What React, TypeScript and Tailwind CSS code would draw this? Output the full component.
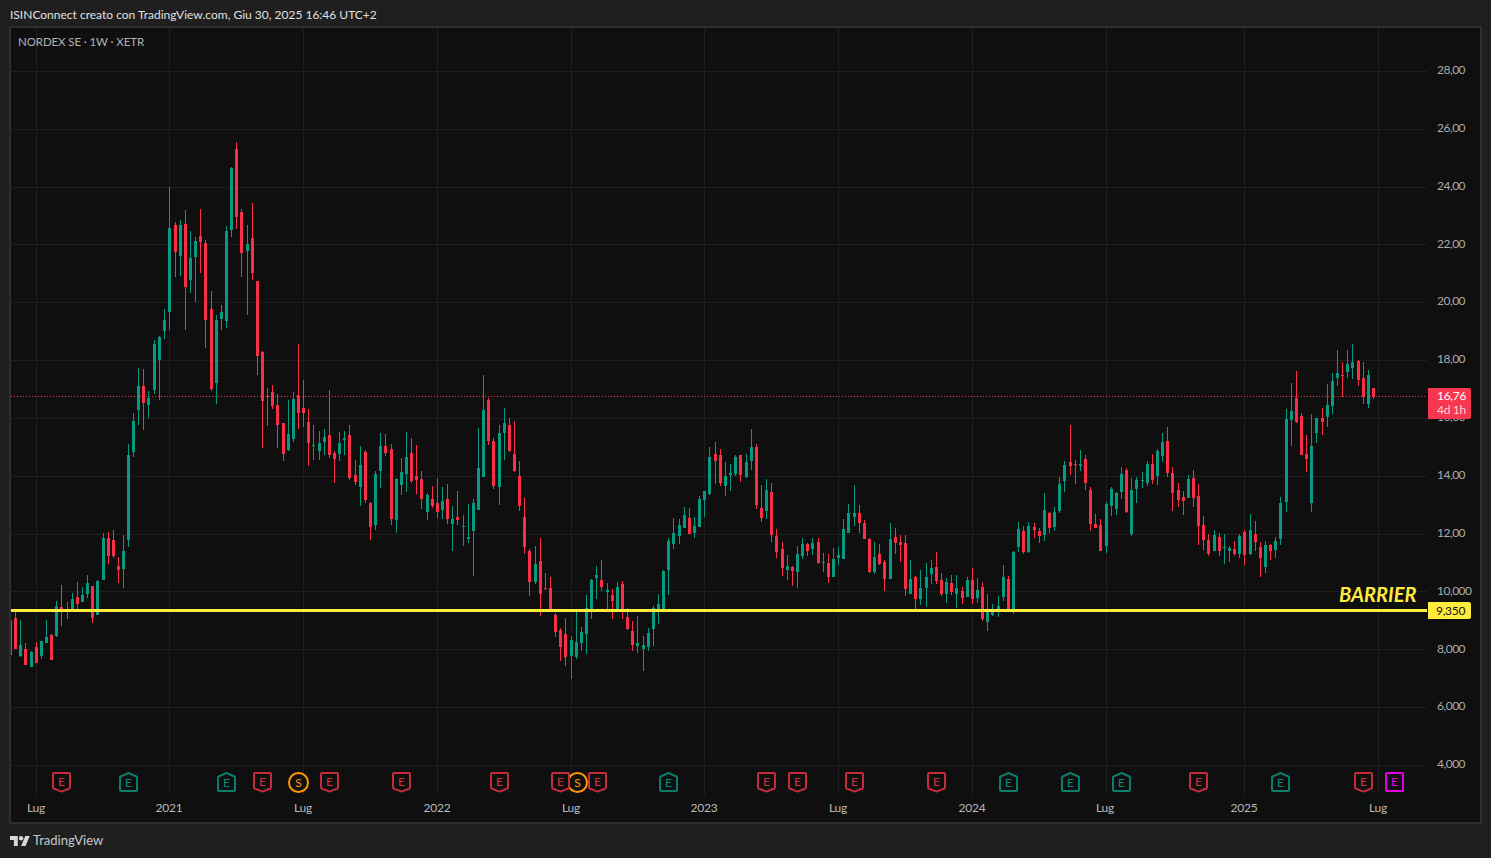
import React from "react";

type Row = [number, number, number, number, number, number];
// [x, high, bodyTop, bodyBottom, low, isGreen]
const part0: Row[] = [
  [10.3,617,620,655,655,1],[15.3,609,618,649,649,0],[20.3,620,645,656,657,1],[25.3,643,649,665,665,0],[31.3,651,652,667,667,1],
  [36.3,642,647,663,663,0],[41.3,641,641,656,659,1],[46.3,620,637,643,643,1],[51.3,634,635,660,660,0],[56.3,601,606,636,637,1],
  [61.3,585,607,611,626,0],[67.3,602,610,612,619,0],[72.3,593,599,610,610,1],[77.3,582,597,604,610,0],[82.3,587,595,602,602,1],
  [87.3,575,583,594,598,1],[92.3,586,586,618,623,0],[97.3,580,581,615,615,1],[103.3,533,538,580,580,1],[108.3,532,538,556,564,0],
  [113.3,530,540,556,558,0],[118.3,557,566,570,583,0],[123.3,535,551,569,588,1],[128.3,444,455,540,547,1],[133.3,413,421,452,457,1],
  [138.3,368,386,410,425,1],[143.3,369,386,403,430,0],[148.3,391,398,405,418,1],[154.3,340,344,390,394,1],[159.3,336,337,360,400,1],
  [164.3,309,320,331,339,1],[169.3,187,228,312,330,1],[175.3,222,225,252,277,0],[180.3,220,225,256,276,1],[185.3,210,224,287,330,0],
  [190.3,231,258,280,293,1],[195.3,237,241,257,302,1],[200.3,209,236,242,273,0],[205.3,240,243,320,348,0],[211.3,291,309,389,391,0],
  [216.3,315,320,383,404,1],[221.3,305,312,319,330,1],[226.3,226,231,321,328,1],[231.3,167,168,230,237,1],[236.3,142,149,217,229,0],
  [241.3,209,212,253,277,0],[247.3,225,244,251,315,1],[252.3,203,238,273,280,0],[257.3,281,281,356,375,0],[262.3,351,352,401,448,0],
  [267.3,388,396,397,426,0],[272.3,385,392,406,409,0],[277.3,394,405,425,448,0],[283.3,423,423,454,461,0],[288.3,400,434,450,451,1],
  [293.3,392,399,439,442,1],[298.3,344,395,413,429,0],[303.3,380,408,413,427,0],[308.3,409,422,443,466,0],[313.3,425,445,446,460,1],
  [319.3,431,443,451,460,1],[324.3,429,437,442,455,1],[329.3,390,435,455,458,0],
];
const part1: Row[] = [
  [13,243,249,267,338,0],[28,186,219,252,272,1],[43,183,204,210,255,1],[58,165,195,324,330,0],[76,270,315,336,345,0],[91,228,285,351,408,1],
  [106,240,246,390,399,0],[121,396,399,471,510,0],[136,303,312,465,480,1],[151,189,228,303,354,1],[166,192,228,249,258,0],[184,222,237,447,465,0],
  [199,324,327,450,489,1],[214,264,306,345,375,1],[229,186,261,312,366,1],[244,204,249,333,339,0],[259,225,318,330,372,0],[274,303,327,387,417,0],
  [292,369,375,426,450,1],[307,348,387,408,414,0],[322,324,399,426,444,0],[337,351,393,420,447,1],[352,342,387,447,462,0],[367,408,447,462,543,1],
  [382,363,441,450,465,0],[400,435,468,471,528,1],[415,402,501,507,519,1],[430,387,399,483,618,1],[445,174,294,420,420,1],[460,15,120,321,321,1],
  [475,84,90,213,225,0],[490,204,213,348,357,0],[508,165,189,351,405,1],[523,114,159,189,270,1],[538,144,165,243,246,0],[553,153,252,303,306,0],
  [568,273,318,408,423,0],[583,384,441,531,552,0],[598,537,543,636,678,0],[616,528,582,636,642,1],[631,504,573,672,738,0],[646,609,654,657,660,0],
  [661,621,654,720,723,0],[676,729,735,786,801,0],[691,774,780,831,873,0],[706,744,792,861,888,0],[724,798,810,858,927,1],[739,723,816,861,867,1],
  [754,771,786,819,843,1],[769,675,714,792,852,1],[784,627,630,717,747,1],[799,588,615,624,687,1],[814,570,630,651,663,0],[832,639,660,666,723,1],
  [847,657,675,693,747,0],[862,636,651,720,720,1],[877,633,642,726,747,0],[892,714,741,777,780,0],[907,753,783,825,843,0],[922,738,819,828,849,1],
  [940,798,825,837,903,1],[955,774,789,831,843,1],[970,708,714,777,828,1],[985,672,702,717,762,1],[1000,600,603,720,720,1],[1015,504,513,600,675,1],
  [1030,444,489,522,537,1],[1048,447,465,498,522,1],[1063,411,435,474,474,1],[1078,414,444,492,492,0],
];
const part2: Row[] = [
  [103,351,378,399,414,1],[118,288,297,381,381,1],[133,273,273,300,351,1],[148,141,171,282,285,1],[166,126,162,183,252,0],[181,147,165,249,258,0],
  [196,186,228,258,288,1],[211,192,219,225,273,1],[226,165,171,222,228,1],[241,165,165,225,246,0],[259,162,186,231,234,1],[274,87,141,183,210,1],
  [289,132,141,315,327,0],[304,255,324,354,366,0],[319,237,270,333,357,1],[334,249,276,405,426,0],[349,387,408,456,474,0],[367,426,447,504,528,0],
  [382,465,498,510,540,1],[397,498,501,513,558,0],[412,438,462,516,564,1],[427,414,432,468,477,1],[442,429,432,453,468,0],[457,414,429,447,465,1],
  [475,414,426,489,492,0],[490,459,486,489,516,1],[505,462,489,531,549,0],[520,444,477,531,531,1],[535,441,465,474,495,1],[550,357,387,477,477,1],
  [565,312,339,399,399,1],[583,255,339,351,378,1],[598,315,339,369,399,0],[613,360,369,417,417,0],[628,414,417,516,519,0],[643,426,471,516,522,1],
  [658,432,462,492,495,0],[673,480,486,537,573,0],[691,369,417,537,537,1],[706,384,411,429,462,0],[721,405,426,435,486,0],[736,405,429,567,588,0],
  [751,480,537,582,582,1],[766,528,531,597,633,0],[781,510,564,597,615,1],[799,489,531,564,621,1],[814,480,504,522,552,1],[829,456,501,543,552,0],
  [844,519,540,582,588,0],[859,534,546,582,609,1],[874,525,549,576,585,0],[889,525,564,582,624,1],[907,561,573,594,612,0],[922,531,540,591,591,1],
  [937,504,540,597,612,0],[952,534,570,594,609,1],[967,546,561,657,663,0],[982,582,630,666,693,1],[997,612,630,645,648,1],[1015,588,618,636,651,1],
  [1030,495,531,591,603,1],[1045,528,537,630,633,0],[1060,453,456,633,642,1],[1075,366,387,441,456,1],
];
const part3: Row[] = [
  [40,558,573,636,642,0],[55,546,558,636,639,1],[73,549,561,570,594,0],[88,564,573,588,609,0],[103,459,510,585,603,1],[118,516,519,564,579,0],
  [133,501,516,561,573,1],[148,411,432,513,519,1],[163,363,375,423,456,1],[181,255,366,378,405,0],[196,360,372,375,432,0],[211,330,372,378,393,1],
  [226,345,357,429,450,0],[241,441,450,552,573,0],[256,522,552,564,564,0],[271,537,555,633,633,0],[289,486,492,618,639,1],[304,441,447,498,528,1],
  [319,456,459,507,525,1],[334,381,402,456,477,1],[349,384,390,516,519,0],[364,414,450,582,588,1],[379,411,420,447,489,1],[397,396,420,423,444,1],
  [412,363,372,429,438,1],[427,342,372,420,432,0],[442,327,333,408,435,1],[457,279,306,348,366,1],[472,261,303,399,411,0],[487,381,399,459,513,0],
  [505,429,450,480,501,0],[520,453,471,483,525,0],[535,405,417,474,474,1],[550,390,414,474,501,0],[565,432,468,558,615,0],[580,528,555,600,630,0],
  [595,582,600,642,648,0],[613,570,585,633,633,1],[628,579,591,633,648,0],[643,582,621,624,672,1],[658,618,624,633,666,1],[673,603,627,642,648,0],
  [688,582,588,642,654,1],[703,570,576,645,675,0],[721,522,570,642,645,1],[736,543,582,606,633,0],[751,606,621,654,711,0],[766,603,615,681,699,1],
  [781,612,615,633,660,0],[796,591,603,630,654,1],[811,471,489,597,615,1],[829,207,237,486,516,1],[844,129,213,240,318,1],[859,93,174,246,249,0],
  [874,219,228,345,345,0],[889,285,342,357,396,0],[904,222,318,489,516,1],[919,234,234,279,309,1],[937,204,234,246,285,0],[952,132,195,231,261,1],
  [967,99,123,198,222,1],[982,30,99,114,138,1],[997,66,105,108,171,0],[1012,30,72,96,114,1],[1027,12,66,84,117,1],[1045,60,63,120,138,0],
  [1060,66,114,171,192,0],[1075,90,105,192,204,1],[1090,144,144,171,177,0],
];

const toPx = (rows: Row[], x0: number, y0: number, s: number): Row[] =>
  rows.map(([x, h, t, b, l, g]) => [
    Math.floor(x0 + x / s),
    Math.round(y0 + h / s),
    Math.round(y0 + t / s),
    Math.round(y0 + b / s),
    Math.round(y0 + l / s),
    g,
  ]);

const candles: Row[] = [
  ...toPx(part0, 0, 0, 1),
  ...toPx(part1, 330, 370, 3),
  ...toPx(part2, 660, 400, 3),
  ...toPx(part3, 1010, 340, 3),
];

const GREEN = "#089981";
const RED = "#f92f45";

const hLines = [71, 129, 187, 244, 302, 360, 418, 476, 534, 591, 649, 707, 765];
const vLines = [36, 169, 303, 437, 571, 704, 838, 972, 1106, 1244, 1378];

const prices = ["28,00", "26,00", "24,00", "22,00", "20,00", "18,00", "16,00", "14,00", "12,00", "10,000", "8,000", "6,000", "4,000"];

const ticks: [string, number][] = [
  ["Lug", 36], ["2021", 169], ["Lug", 303], ["2022", 437], ["Lug", 571], ["2023", 704],
  ["Lug", 838], ["2024", 972], ["Lug", 1105], ["2025", 1244], ["Lug", 1378],
];
const TICK_W = 50;

type Kind = "red" | "green" | "orange" | "purple";
const events: [Kind, number][] = [
  ["orange", 298], ["orange", 577],
  ["red", 61], ["green", 128], ["green", 226], ["red", 262], ["red", 329], ["red", 401], ["red", 499], ["red", 560], ["red", 597],
  ["green", 668], ["red", 766], ["red", 797], ["red", 854], ["red", 936], ["green", 1008], ["green", 1070], ["green", 1121],
  ["red", 1198], ["green", 1280], ["red", 1363], ["purple", 1394],
];

function Marker({ kind, x }: { kind: Kind; x: number }) {
  if (kind === "orange") {
    return (
      <div className="absolute top-[744px] flex h-[21px] w-[21px] items-center justify-center rounded-full border-2 border-[#ff9800] bg-[#0f0f0f] text-[12px] leading-none text-[#ff9800]" style={{ left: x - 21 }}>
        S
      </div>
    );
  }
  const cfg = {
    red: { color: "text-[#c42c3c]", text: "text-[#d42f40]", d: "M4 2h15a1 1 0 0 1 1 1v13.6a1 1 0 0 1-.6.9L11.500 20.600 3.600 17.500a1 1 0 0 1-.6-.9V3a1 1 0 0 1 1-1z", pt: "pb-[1px]" },
    green: { color: "text-[#0a7d6c]", text: "text-[#0d8b78]", d: "M4 20h15a1 1 0 0 0 1-1V6.400a1 1 0 0 0-.6-.9L11.500 2 3.600 5.500a1 1 0 0 0-.6.9V19a1 1 0 0 0 1 1z", pt: "pt-[2px]" },
    purple: { color: "text-[#e200e2]", text: "text-[#ea00ea]", d: "M4 2h15a1 1 0 0 1 1 1v16a1 1 0 0 1-1 1H4a1 1 0 0 1-1-1V3a1 1 0 0 1 1-1z", pt: "" },
  }[kind];
  return (
    <div className={`absolute top-[743px] flex h-[22px] w-[22px] items-center justify-center pl-[1px] text-[12px] leading-none ${cfg.pt} ${cfg.text}`} style={{ left: x - 22 }}>
      <svg viewBox="0 0 22 22" className={`absolute inset-0 h-[22px] w-[22px] ${cfg.color}`}>
        <path d={cfg.d} fill="#0f0f0f" stroke="currentColor" strokeWidth="2" strokeLinejoin="round" />
      </svg>
      <span className="relative">E</span>
    </div>
  );
}

function Chart() {
  return (
    <svg viewBox="11 28 1416 767" className="block h-[767px] w-[1416px] shrink-0" shapeRendering="crispEdges">
      {hLines.map((y) => (
        <rect key={y} x="11" y={y} width="1416" height="1" fill="#1e1e1e" />
      ))}
      {vLines.map((x) => (
        <rect key={x} x={x} y="28" width="1" height="767" fill="#1e1e1e" />
      ))}
      {candles.map(([x, h, t, b, l, g]) => {
        const c = g ? GREEN : RED;
        return (
          <g key={x} fill={c}>
            <rect x={x} y={h} width="1" height={Math.max(l - h, 1)} />
            <rect x={x - 1} y={t} width="3" height={Math.max(b - t, 1)} />
          </g>
        );
      })}
      <line x1="11" x2="1427" y1="396.500" y2="396.500" stroke={RED} strokeWidth="1" strokeDasharray="1 2" />
      <rect x="11" y="609" width="1416" height="3" fill="#ffeb3b" />
    </svg>
  );
}

export default function App() {
  const font = { fontFamily: '"Lato", "Noto Sans", sans-serif' };
  return (
    <div className="flex h-[858px] w-[1491px] flex-col overflow-hidden bg-[#1f1f1f] text-[12px] text-[#d8d8d8]" style={font}>
      <header className="flex h-[26px] shrink-0 items-center pl-[10px] pt-[3px] text-[12px] leading-none text-[#e0e0e0]">
        ISINConnect creato con TradingView.com, Giu 30, 2025 16:46 UTC+2
      </header>

      <main className="relative mx-[9px] h-[798px] shrink-0 border-2 border-[#2e2e2e] bg-[#0f0f0f]">
        <div className="flex h-[767px]">
          <Chart />
          <div className="flex-1 pl-[10px] pt-[13px] tracking-[-0.5px] text-[#ababab]">
            {prices.map((p, i) => (
              <div key={i} className="flex h-[57.87px] items-center leading-none">{p}</div>
            ))}
          </div>
        </div>

        <div className="flex h-[27px] items-center tracking-[-0.2px] text-[#b8b8b8]">
          {ticks.map(([label, x], i) => {
            const prevEnd = i === 0 ? 11 : ticks[i - 1][1] + TICK_W / 2;
            return (
              <div key={i} className="shrink-0 pb-[1px] text-center leading-none" style={{ width: TICK_W, marginLeft: x - TICK_W / 2 - prevEnd }}>
                {label}
              </div>
            );
          })}
        </div>

        <div className="absolute left-[7px] top-[8px] text-[11.5px] leading-none tracking-[-0.1px] text-[#b2b2b2]">NORDEX SE · 1W · XETR</div>

        {events.map(([k, x], i) => (
          <Marker key={i} kind={k} x={x} />
        ))}

        <div className="absolute left-[1328px] top-[554px] text-[20px] font-bold italic leading-[24px] text-[#ffeb3b]">BARRIER</div>

        <div className="absolute left-[1417px] top-[360px] flex h-[31px] w-[43px] flex-col rounded-r-[2px] bg-[#f7374f] pl-[9px] pt-[1px] text-[12px] leading-[14px] tracking-[-0.3px] text-white">
          <span>16,76</span>
          <span className="text-[#ffd5da]">4d 1h</span>
        </div>
        <div className="absolute left-[1417px] top-[574px] flex h-[17px] w-[43px] items-center rounded-r-[2px] bg-[#ffeb3b] pl-[8px] text-[12px] leading-none tracking-[-0.3px] text-[#111]">
          9,350
        </div>
      </main>

      <footer className="flex flex-1 items-center gap-[3px] pb-[1px] pl-[10px] text-[13px] leading-none text-[#c8c8c8]">
        <svg viewBox="0 4 36 18" className="h-[10px] w-[20px]" fill="#d8d8d8">
          <path d="M14 22H7V11H0V4h14v18zM28 22h-8l7.5-18h8L28 22z" />
          <circle cx="20" cy="8" r="4" />
        </svg>
        <span>TradingView</span>
      </footer>
    </div>
  );
}
